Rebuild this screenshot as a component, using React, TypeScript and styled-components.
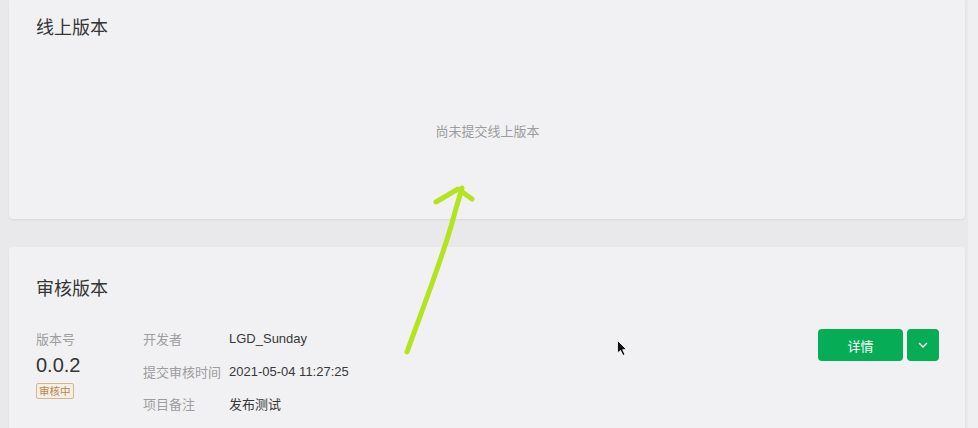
import React from "react";
import styled, { createGlobalStyle } from "styled-components";

const GlobalStyle = createGlobalStyle`
  html, body {
    margin: 0;
    padding: 0;
    background: #e9e9eb;
    font-family: "Noto Sans CJK SC", "Noto Sans", "Liberation Sans", sans-serif;
    overflow: hidden;
  }
`;

const Page = styled.div`
  position: relative;
  display: flex;
  width: 978px;
  height: 428px;
  overflow: hidden;
  background: #e9e9eb;
`;

const Main = styled.div`
  flex: 1;
  display: flex;
  flex-direction: column;
  gap: 28px;
  padding: 0 3px 0 9px;
`;

const Scrollbar = styled.div`
  width: 10px;
  background: #efeff1;
`;

const Card = styled.section<{ $top: number }>`
  background: #f1f1f3;
  border-radius: 4px;
  box-shadow: 0 1px 2px rgba(0, 0, 0, 0.08);
  padding: ${(p) => p.$top}px 26px 0 27px;
  flex-shrink: 0;
`;

const TopCard = styled(Card)`
  border-top-left-radius: 0;
  border-top-right-radius: 0;
  height: 219px;
  box-sizing: border-box;
`;

const Title = styled.h2`
  margin: 0;
  font-size: 18px;
  font-weight: 400;
  line-height: 24px;
  color: #353535;
`;

const Empty = styled.div`
  margin-top: 83px;
  text-align: center;
  font-size: 13px;
  line-height: 20px;
  color: #9c9c9c;
`;

const InfoRow = styled.div`
  display: flex;
  align-items: flex-start;
  margin-top: 30px;
  padding-bottom: 30px;
`;

const VersionCol = styled.div`
  width: 107px;
  display: flex;
  flex-direction: column;
  align-items: flex-start;
`;

const Label = styled.span`
  font-size: 13px;
  line-height: 20px;
  color: #9d9d9d;
`;

const Version = styled.div`
  margin-top: 4px;
  font-family: "Liberation Sans", "Noto Sans", sans-serif;
  font-size: 20px;
  line-height: 24px;
  color: #353535;
`;

const Badge = styled.span`
  margin-top: 6px;
  height: 16px;
  box-sizing: border-box;
  padding: 0 2px;
  border: 1px solid #d6b78c;
  border-radius: 2px;
  background: #f5eee3;
  color: #b38850;
  font-size: 10.5px;
  line-height: 14px;
`;

const Details = styled.div`
  flex: 1;
  display: grid;
  grid-template-columns: 86px auto;
  row-gap: 12.5px;
  align-content: start;
`;

const Value = styled.span`
  font-size: 13px;
  line-height: 20px;
  color: #383838;
  font-family: "Liberation Sans", "Noto Sans CJK SC", sans-serif;
`;

const ValueCn = styled(Value)`
  font-family: "Noto Sans CJK SC", sans-serif;
`;

const Actions = styled.div`
  display: flex;
  gap: 4px;
`;

const GreenButton = styled.button<{ $w: number }>`
  height: 32px;
  width: ${(p) => p.$w}px;
  border: none;
  border-radius: 4px;
  background: #07ad56;
  color: #ffffff;
  font-family: "Noto Sans CJK SC", sans-serif;
  font-size: 13px;
  display: flex;
  align-items: center;
  justify-content: center;
  padding: 0;
  cursor: pointer;
`;

const Overlay = styled.svg`
  position: absolute;
  left: 0;
  top: 0;
  pointer-events: none;
`;

export default function App() {
  return (
    <>
      <GlobalStyle />
      <Page>
        <Main>
          <TopCard $top={14}>
            <Title>线上版本</Title>
            <Empty>尚未提交线上版本</Empty>
          </TopCard>
          <Card $top={28}>
            <Title>审核版本</Title>
            <InfoRow>
              <VersionCol>
                <Label>版本号</Label>
                <Version>0.0.2</Version>
                <Badge>审核中</Badge>
              </VersionCol>
              <Details>
                <Label>开发者</Label>
                <Value>LGD_Sunday</Value>
                <Label>提交审核时间</Label>
                <Value>2021-05-04 11:27:25</Value>
                <Label>项目备注</Label>
                <ValueCn>发布测试</ValueCn>
              </Details>
              <Actions>
                <GreenButton $w={85}>详情</GreenButton>
                <GreenButton $w={32} aria-label="更多">
                  <svg width="10" height="6" viewBox="0 0 10 6">
                    <path d="M1 1l4 4 4-4" fill="none" stroke="#fff" strokeWidth="1.4" />
                  </svg>
                </GreenButton>
              </Actions>
            </InfoRow>
          </Card>
        </Main>
        <Scrollbar />
        <Overlay width="978" height="428" viewBox="0 0 978 428">
          <path
            d="M407 352 C 422 310 440 265 452 223 C 458 200 461 193 462 188"
            fill="none"
            stroke="#b4e31f"
            strokeWidth="5"
            strokeLinecap="round"
          />
          <path
            d="M436 202 L 458 189 L 472 199"
            fill="none"
            stroke="#b4e31f"
            strokeWidth="5"
            strokeLinecap="round"
            strokeLinejoin="round"
          />
          <path
            d="M617.5 340.5 L617.5 353 L620.5 350.5 L623 355.5 L625 354.5 L622.7 349.7 L626.5 349.5 Z"
            fill="#111"
            stroke="#fff"
            strokeWidth="0.8"
          />
        </Overlay>
      </Page>
    </>
  );
}
